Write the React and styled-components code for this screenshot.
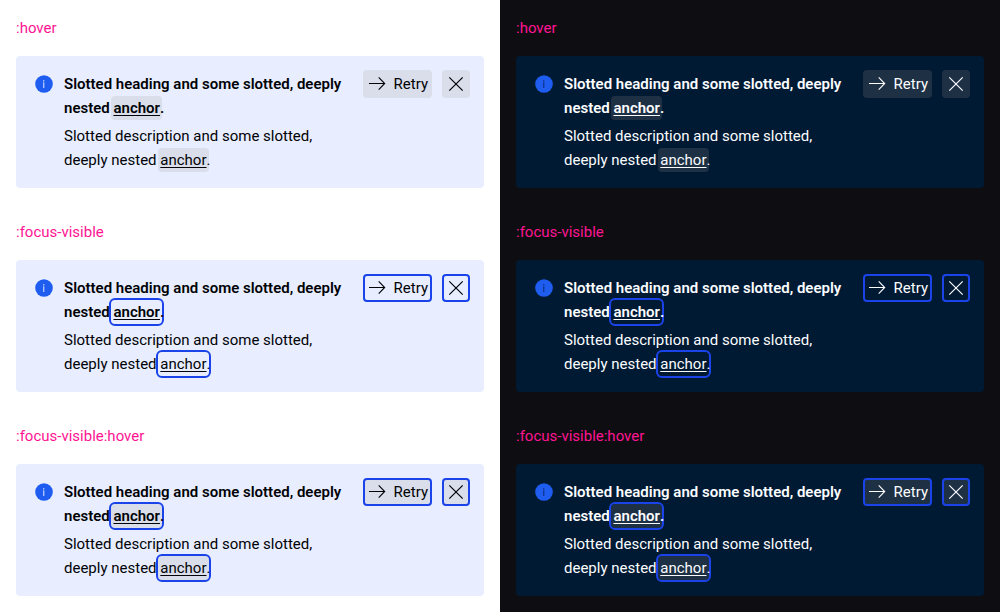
import React from 'react';
import styled, { createGlobalStyle, ThemeProvider, css } from 'styled-components';

const light = {
  page: '#ffffff',
  surface: '#e8eeff',
  text: '#010205',
  hover: '#d9deea',
  glyph: '#a9c1fb',
};

const dark = {
  page: '#0e0e12',
  surface: '#001a33',
  text: '#fbfcff',
  hover: '#1e3044',
  glyph: '#123a94',
};

const GlobalStyle = createGlobalStyle`
  *, *::before, *::after { box-sizing: border-box; }
  body {
    margin: 0;
    font-family: Roboto, "Liberation Sans", sans-serif;
    font-size: 15px;
    line-height: 24px;
  }
`;

const Page = styled.main`
  display: grid;
  grid-template-columns: 1fr 1fr;
  min-height: 100vh;
`;

const Column = styled.div`
  background: ${({ theme }) => theme.page};
  color: ${({ theme }) => theme.text};
`;

const State = styled.section`
  display: flex;
  flex-direction: column;
  gap: 16px;
  padding: 16px;
`;

const StateLabel = styled.h2`
  margin: 0;
  font-size: 15px;
  font-weight: 400;
  color: #ff1493;
`;

const Notification = styled.article`
  display: flex;
  align-items: flex-start;
  padding: 16px;
  border-radius: 4px;
  background: ${({ theme }) => theme.surface};
`;

const Icon = styled.svg`
  display: block;
  flex: none;
  width: 24px;
  height: 24px;
`;

const InfoGlyph = styled.path`
  fill: ${({ theme }) => theme.glyph};
`;

const Content = styled.div`
  flex: 1;
  min-width: 0;
  display: flex;
  flex-direction: column;
  gap: 4px;
  margin: 0 16px 0 8px;
`;

const Heading = styled.h3`
  margin: 0;
  font-size: 15px;
  font-weight: 600;
`;

const Description = styled.p`
  margin: 0;
`;

const Anchor = styled.a`
  display: inline-block;
  margin: 0 -2px;
  padding: 0 2px;
  border-radius: 4px;
  color: inherit;
  text-decoration: underline;
  text-underline-offset: 2px;
  text-decoration-thickness: 1px;
  background: ${({ $hover, theme }) => ($hover ? theme.hover : 'transparent')};
  ${({ $focus }) => $focus && css`outline: 2px solid #1a44ea;`}
`;

const Actions = styled.div`
  display: flex;
  gap: 10px;
  margin: -2px;
`;

const ActionButton = styled.button`
  display: flex;
  align-items: center;
  gap: 3px;
  height: 28px;
  padding: 0 ${({ $square }) => ($square ? '0' : '2px')};
  border: 2px solid ${({ $focus }) => ($focus ? '#1a44ea' : 'transparent')};
  border-radius: 4px;
  background: ${({ $hover, theme }) => ($hover ? theme.hover : 'transparent')} border-box;
  color: inherit;
  font: inherit;
  cursor: pointer;
`;

const InfoIcon = () => (
  <Icon viewBox="0 0 24 24" aria-hidden="true">
    <circle cx="12" cy="12" r="8.8" fill="#1f5cf0" />
    <InfoGlyph d="M11 8h1.4v1.4h-1.4zM11 10.2h1.4v5.8h-1.4z" />
  </Icon>
);

const ArrowIcon = () => (
  <Icon viewBox="0 0 24 24" fill="none" stroke="currentColor" strokeWidth="1.1" aria-hidden="true">
    <path d="M2 11.5h15.5M11.7 5.3l6 6.2-6 6.2" />
  </Icon>
);

const CloseIcon = () => (
  <Icon viewBox="0 0 24 24" fill="none" stroke="currentColor" strokeWidth="1.2" aria-hidden="true">
    <path d="M5.3 5.3l13.4 13.4M18.7 5.3L5.3 18.7" />
  </Icon>
);

const InlineNotification = ({ hover, focus }) => (
  <Notification>
    <InfoIcon />
    <Content>
      <Heading>
        Slotted heading and some slotted, deeply nested{' '}
        <Anchor href="#" $hover={hover} $focus={focus}>anchor</Anchor>.
      </Heading>
      <Description>
        Slotted description and some slotted, deeply nested{' '}
        <Anchor href="#" $hover={hover} $focus={focus}>anchor</Anchor>.
      </Description>
    </Content>
    <Actions>
      <ActionButton type="button" $hover={hover} $focus={focus}>
        <ArrowIcon />
        Retry
      </ActionButton>
      <ActionButton type="button" aria-label="Close" $square $hover={hover} $focus={focus}>
        <CloseIcon />
      </ActionButton>
    </Actions>
  </Notification>
);

const states = [
  { label: ':hover', hover: true, focus: false },
  { label: ':focus-visible', hover: false, focus: true },
  { label: ':focus-visible:hover', hover: true, focus: true },
];

export default function App() {
  return (
    <>
      <GlobalStyle />
      <Page>
        {[light, dark].map((theme, i) => (
          <ThemeProvider theme={theme} key={i}>
            <Column>
              {states.map(({ label, hover, focus }) => (
                <State key={label}>
                  <StateLabel>{label}</StateLabel>
                  <InlineNotification hover={hover} focus={focus} />
                </State>
              ))}
            </Column>
          </ThemeProvider>
        ))}
      </Page>
    </>
  );
}
